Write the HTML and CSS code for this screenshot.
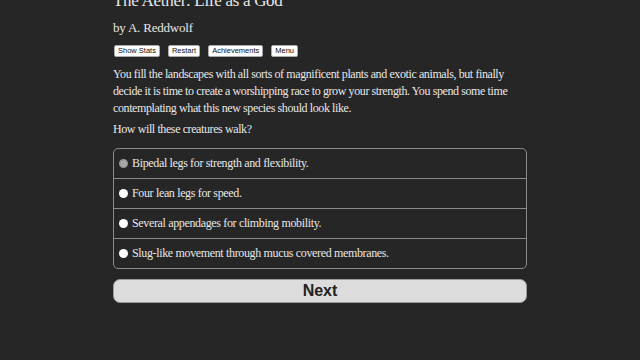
FILE: index.html
```html
<!DOCTYPE html>
<html lang="en">
  <head>
    <meta charset="UTF-8" />
    <title>The Aether: Life as a God</title>
    <link rel="stylesheet" href="styles.css">
  </head>
  <body>
    <div class="container">
      <h1 class="title">The Aether: Life as a God</h1>
      <h2 class="author">by A. Reddwolf</h2>

      <!-- Top buttons -->
      <div class="buttons">
        <button class="spacedLink">Show Stats</button>
        <button class="spacedLink">Restart</button>
        <button class="spacedLink">Achievements</button>
        <button class="spacedLink">Menu</button>
      </div>

      <div class="text">
        <p>You fill the landscapes with all sorts of magnificent plants and exotic animals, but finally decide it is time to create a worshipping race to grow your strength. You spend some time contemplating what this new species should look like.</p>
        <p>How will these creatures walk?</p>
      </div>

      <form class="choice-form">
        <div class="choice">
          <label class="option"><input type="radio" name="choice" value="0" checked> Bipedal legs for strength and flexibility.</label>
          <label class="option"><input type="radio" name="choice" value="1"> Four lean legs for speed.</label>
          <label class="option"><input type="radio" name="choice" value="2"> Several appendages for climbing mobility.</label>
          <label class="option"><input type="radio" name="choice" value="3"> Slug-like movement through mucus covered membranes.</label>
        </div>
        <button type="button" class="next">Next</button>
      </form>
    </div>
  </body>
</html>
```

FILE: styles.css
```css
/* General Styles */
body {
  margin: 0;
  padding: 0;
  background-color: #262626;
  color: #e6e6e6;
  font-family: "Liberation Serif", "DejaVu Serif", serif;
  height: 100vh;
  overflow: hidden;
}

.container {
  width: 414px;
  margin: -11px auto 0;
}

.title {
  font-size: 17px;
  font-weight: normal;
  letter-spacing: -0.3px;
  margin: 0;
  line-height: 24px;
}

.author {
  font-size: 13px;
  font-weight: normal;
  letter-spacing: -0.2px;
  margin: 6px 0 0;
  line-height: 18px;
}

.buttons {
  display: flex;
  gap: 8px;
  margin-top: 8px;
  padding-left: 1px;
}

.spacedLink {
  font-family: "Liberation Sans", Arial, sans-serif;
  font-size: 7.5px;
  color: #111;
  background-color: #fff;
  border: 1px solid #aaa;
  border-radius: 2px;
  padding: 0 3px;
  height: 12px;
  line-height: 10px;
}

.text {
  margin-top: 9px;
  font-size: 12px;
  letter-spacing: -0.4px;
  line-height: 17px;
}

.text p {
  margin: 0 0 4px;
}

.choice-form {
  margin-top: 10px;
}

.choice {
  border: 1px solid #8a8a8a;
  border-radius: 5px;
}

.option {
  display: flex;
  align-items: center;
  height: 29px;
  padding-left: 5px;
  font-size: 12px;
  letter-spacing: -0.35px;
  border-top: 1px solid #8a8a8a;
}

.option:first-child {
  border-top: none;
}

.option input {
  appearance: none;
  width: 9px;
  height: 9px;
  margin: 0 4px 0 0;
  border-radius: 50%;
  background-color: #fff;
}

.option input:checked {
  background-color: #9a9a9a;
  border: 2px solid #9a9a9a;
  box-shadow: inset 0 0 0 1px #bbb;
}

.next {
  display: block;
  width: 100%;
  height: 24px;
  margin-top: 10px;
  background-color: #dcdcdc;
  border: 1px solid #999;
  border-radius: 7px;
  font-family: "Liberation Sans", Arial, sans-serif;
  font-size: 16px;
  font-weight: bold;
  color: #222;
}
```
